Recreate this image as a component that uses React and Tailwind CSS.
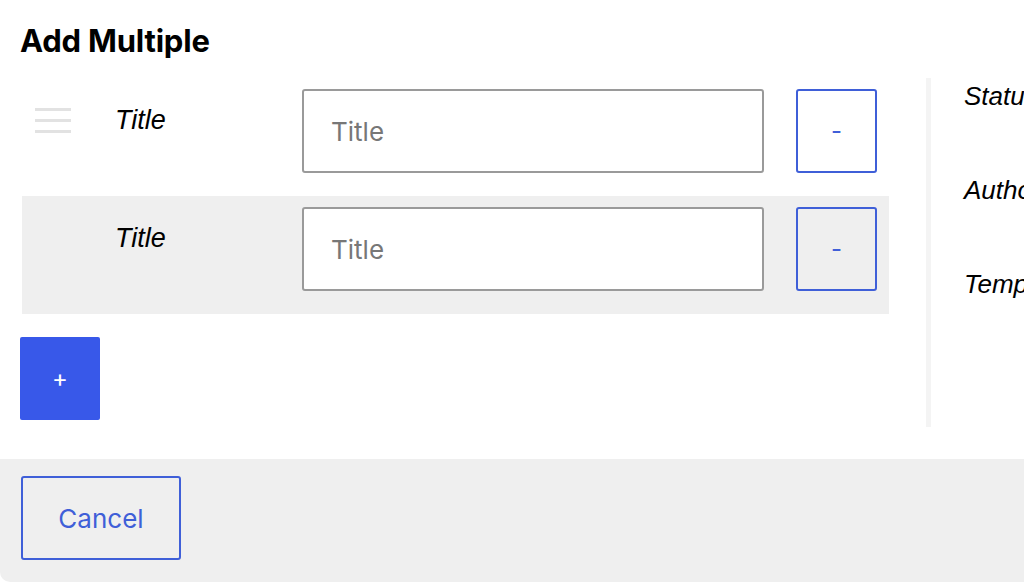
export default function App() {
  const rows = [
    { handle: true, shaded: false },
    { handle: false, shaded: true },
  ];

  return (
    <div className="w-[1024px] h-[582px] overflow-hidden bg-white flex flex-col font-['Inter',sans-serif] text-black">
      <div className="h-[78px] px-5 pt-[22px]">
        <h1 className="text-[31px] leading-[38px] font-bold tracking-[-0.2px]">Add Multiple</h1>
      </div>

      <div className="flex h-[381px]">
        <div className="w-[889px] shrink-0 pl-5 flex flex-col">
          {rows.map((r, i) => (
            <div
              key={i}
              className={`ml-[2px] h-[118px] flex items-start pl-[13px] pr-[12px] pt-[11px] ${r.shaded ? "bg-[#efefef]" : ""}`}
            >
              <div className="w-[36px] h-[84px] pt-[19px] flex flex-col gap-[8px]">
                {r.handle && (
                  <>
                    <span className="block h-[3px] bg-[#e2e2e2]" />
                    <span className="block h-[3px] bg-[#e2e2e2]" />
                    <span className="block h-[3px] bg-[#e2e2e2]" />
                  </>
                )}
              </div>
              <div className="w-[187px] ml-[44px] pt-[16px] font-['Liberation_Sans',sans-serif] italic text-[27px] leading-[31px]">
                Title
              </div>
              <input
                placeholder="Title"
                className="w-[462px] h-[84px] bg-white border-2 border-[#9a9a9a] rounded-[3px] px-[27px] text-[26px] placeholder:text-[#777] outline-none"
              />
              <button className="ml-[32px] w-[81px] h-[84px] border-2 border-[#3f5fd8] rounded-[3px] text-[#3f5fd8] text-[24px] leading-none">
                -
              </button>
            </div>
          ))}
          <button className="mt-[23px] w-[80px] h-[83px] bg-[#3858e9] rounded-[2px] text-white text-[24px] leading-none">
            +
          </button>
        </div>

        <div className="ml-[37px] w-[5px] shrink-0 h-[349px] bg-[#f4f4f4]" />

        <div className="ml-[33px] shrink-0 pt-[3px] flex flex-col gap-[64px] font-['Liberation_Sans',sans-serif] italic text-[26px] leading-[30px] whitespace-nowrap">
          <span>Status</span>
          <span>Author</span>
          <span>Template</span>
        </div>
      </div>

      <div className="flex-1 bg-[#efefef] rounded-bl-[10px] px-[21px] pt-[17px]">
        <button className="w-[160px] h-[84px] border-2 border-[#3f5fd8] rounded-[3px] text-[#3f5fd8] text-[26px]">
          Cancel
        </button>
      </div>
    </div>
  );
}
